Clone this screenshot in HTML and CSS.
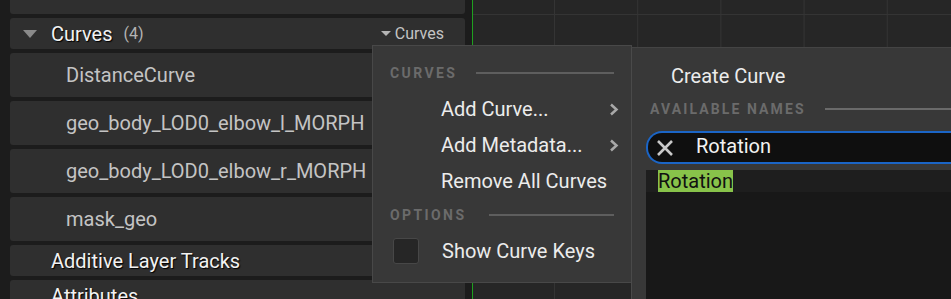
FILE: index.html
```html
<!DOCTYPE html>
<html lang="en">
<head>
  <meta charset="UTF-8">
  <title>Curves</title>
  <link rel="stylesheet" href="styles.css">
</head>
<body>
  <div class="editor">
    <div class="tracks">
      <div class="row header partial"></div>
      <div class="row header">
        <span class="caret"></span>
        <span class="title">Curves</span>
        <span class="count">(4)</span>
        <span class="row-menu"><span class="mini-caret"></span>Curves</span>
      </div>
      <div class="row child">DistanceCurve</div>
      <div class="row child">geo_body_LOD0_elbow_l_MORPH</div>
      <div class="row child">geo_body_LOD0_elbow_r_MORPH</div>
      <div class="row child">mask_geo</div>
      <div class="row header"><span class="title">Additive Layer Tracks</span></div>
      <div class="row header"><span class="title">Attributes</span></div>
    </div>
    <div class="timeline"></div>
  </div>

  <div class="menu">
    <div class="section"><span>CURVES</span><i></i></div>
    <div class="item first">Add Curve...<svg class="chev" width="10" height="13" viewBox="0 0 10 13"><path d="M2 1.5 L7.5 6.5 L2 11.5" stroke="#a8a8a8" stroke-width="2.5" fill="none"/></svg></div>
    <div class="item">Add Metadata...<svg class="chev" width="10" height="13" viewBox="0 0 10 13"><path d="M2 1.5 L7.5 6.5 L2 11.5" stroke="#a8a8a8" stroke-width="2.5" fill="none"/></svg></div>
    <div class="item">Remove All Curves</div>
    <div class="section options"><span>OPTIONS</span><i></i></div>
    <div class="item check"><span class="box"></span>Show Curve Keys</div>
  </div>

  <div class="submenu">
    <div class="create">Create Curve</div>
    <div class="section names"><span>AVAILABLE NAMES</span><i></i></div>
    <div class="search">
      <svg width="18" height="18" viewBox="0 0 18 18"><path d="M2 2 L16 16 M16 2 L2 16" stroke="#c9c9c9" stroke-width="2.6" fill="none"/></svg>
      <span class="query">Rotation</span>
    </div>
    <div class="list">
      <div class="list-row"><span class="match">Rotation</span></div>
    </div>
  </div>
</body>
</html>
```

FILE: styles.css
```css
body {
  margin: 0;
  width: 951px;
  height: 299px;
  overflow: hidden;
  background-color: #1c1c1c;
  font-family: Roboto, "Liberation Sans", sans-serif;
  position: relative;
}
.editor {
  display: flex;
  height: 299px;
}
.tracks {
  width: 455px;
  padding-left: 10px;
  padding-right: 7px;
  border-left: 8px solid #161616;
  margin-left: -8px;
  display: flex;
  flex-direction: column;
  gap: 4px;
  margin-top: -17px;
}
.row {
  background-color: #2f2f2f;
  border-radius: 3px;
  display: flex;
  align-items: center;
  flex-shrink: 0;
}
.row.header {
  height: 31px;
  padding-left: 41px;
}
.row.child {
  height: 44px;
  padding-left: 56px;
  color: #c4c4c4;
  font-size: 20px;
}
.caret {
  width: 0;
  height: 0;
  border-left: 7px solid transparent;
  border-right: 7px solid transparent;
  border-top: 8px solid #8a8a8a;
  margin-left: -28px;
  margin-right: 14px;
}
.title {
  color: #f2f2f2;
  font-size: 20px;
  text-shadow: 1px 1px 1px #000;
}
.count {
  color: #b4b4b4;
  font-size: 16px;
  margin-left: 11px;
}
.row-menu {
  margin-left: auto;
  margin-right: 21px;
  color: #c4c4c4;
  font-size: 16px;
  display: flex;
  align-items: center;
}
.mini-caret {
  width: 0;
  height: 0;
  border-left: 5px solid transparent;
  border-right: 5px solid transparent;
  border-top: 5px solid #b4b4b4;
  margin-right: 4px;
}
.timeline {
  flex: 1;
  border-left: 1px solid #1fa01f;
  background-color: #262626;
  background-image:
    linear-gradient(to bottom, transparent 14px, #343434 14px, #343434 15px, transparent 15px),
    linear-gradient(to right, #343434 1px, transparent 1px);
  background-size: 100% 100%, 83.2px 100%;
  background-position: 0 0, 81px 0;
  background-repeat: no-repeat, repeat-x;
}

/* context menu */
.menu {
  position: absolute;
  left: 372px;
  top: 45px;
  width: 258px;
  height: 220px;
  background-color: #383838;
  border: 1px solid #484848;
  padding-top: 16px;
}
.section {
  display: flex;
  align-items: center;
  height: 22px;
  padding-left: 17px;
  padding-right: 17px;
  color: #6b6b6b;
  font-size: 14px;
  font-weight: bold;
  letter-spacing: 2.4px;
}
.section i {
  flex: 1;
  height: 2px;
  background-color: #5e5e5e;
  margin-left: 19px;
}
.section.options {
  margin-top: 5px;
}
.section.options i {
  margin-left: 23px;
}
.item {
  height: 36px;
  display: flex;
  align-items: center;
  padding-left: 68px;
  padding-right: 12px;
  color: #ececec;
  font-size: 20px;
}
.item.first {
  margin-top: 7px;
}
.chev {
  margin-left: auto;
}
.item.check {
  height: 40px;
  margin-top: 5px;
  padding-left: 20px;
}
.box {
  width: 24px;
  height: 24px;
  border: 1px solid #474747;
  border-radius: 3px;
  background-color: #262626;
  margin-right: 23px;
}

/* create curve submenu */
.submenu {
  position: absolute;
  left: 631px;
  top: 47px;
  right: 0;
  bottom: 0;
  background-color: #383838;
  border-left: 1px solid #4a4a4a;
  border-top: 1px solid #444;
}
.create {
  margin-top: 16px;
  height: 24px;
  line-height: 24px;
  padding-left: 39px;
  color: #ececec;
  font-size: 20px;
}
.section.names {
  margin-top: 10px;
  padding-left: 18px;
  padding-right: 0;
  letter-spacing: 2.1px;
}
.section.names i {
  margin-left: 19px;
  background-color: #6a6a6a;
}
.search {
  margin: 11px 0 0 14px;
  height: 29px;
  border: 2px solid #1b65c6;
  border-right: none;
  border-radius: 16px 0 0 16px;
  background-color: #0f0f0f;
  display: flex;
  align-items: center;
  padding-left: 8px;
  color: #f2f2f2;
  font-size: 20px;
}
.search svg {
  margin-right: 22px;
}
.query {
  margin-top: -3px;
}
.list {
  margin: 6px 0 0 14px;
  height: 140px;
  background-color: #181818;
}
.list-row {
  height: 22px;
  background-color: #1e1e1e;
  padding-left: 12px;
}
.match {
  display: inline-block;
  height: 22px;
  line-height: 23px;
  background-color: #88c34a;
  color: #111;
  font-size: 20px;
}
```
